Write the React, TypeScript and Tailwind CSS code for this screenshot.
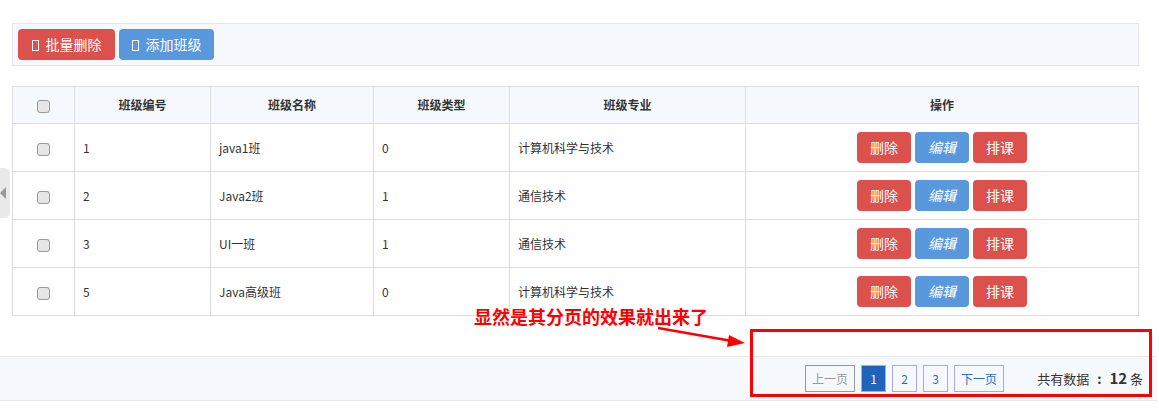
import React from 'react';

const rows = [
  {id: '1', name: 'java1班', type: '0', major: '计算机科学与技术'},
  {id: '2', name: 'Java2班', type: '1', major: '通信技术'},
  {id: '3', name: 'UI一班', type: '1', major: '通信技术'},
  {id: '5', name: 'Java高级班', type: '0', major: '计算机科学与技术'},
];

const font = {fontFamily: '"Noto Sans CJK SC", "Noto Sans", sans-serif'};

const Box = () => <span className="inline-block w-[7px] h-[11px] border border-white mr-[7px] align-[-1px]" />;

const Check = () => <span className="inline-block w-[13px] h-[13px] rounded-[3px] border border-[#9a9a9a] bg-[#e6e6e6] align-middle" />;

const App: React.FC = () => {
  return (
    <div className="relative w-[1159px] h-[415px] bg-white text-[#333] overflow-hidden" style={font}>
      {/* left collapse tab */}
      <div className="absolute left-0 top-[168px] w-[10px] h-[50px] bg-[#e9e9e9] rounded-r-[5px] flex items-center">
        <span className="w-0 h-0 border-y-[6px] border-y-transparent border-r-[6px] border-r-[#999]" />
      </div>

      <div className="pt-[23px] pl-[12px] w-[1139px]">
        <div className="h-[43px] border border-[#e6e6e6] bg-[#f5f9fd] flex items-center gap-[4px] px-[5px]">
          <button className="h-[31px] w-[97px] rounded-[4px] bg-[#dd514c] text-white text-[14px]"><Box />批量删除</button>
          <button className="h-[31px] w-[95px] rounded-[4px] bg-[#5a98de] text-white text-[14px]"><Box />添加班级</button>
        </div>

        <table className="mt-[20px] w-[1127px] border-collapse text-[12px] table-fixed">
          <thead>
            <tr className="h-[37px] bg-[#f5f9fd] font-bold">
              <th className="w-[62px] border border-[#ddd]"><Check /></th>
              <th className="w-[136px] border border-[#ddd]">班级编号</th>
              <th className="w-[163px] border border-[#ddd]">班级名称</th>
              <th className="w-[136px] border border-[#ddd]">班级类型</th>
              <th className="w-[236px] border border-[#ddd]">班级专业</th>
              <th className="border border-[#ddd]">操作</th>
            </tr>
          </thead>
          <tbody>
            {rows.map((r) => (
              <tr key={r.id} className="h-[48px]">
                <td className="border border-[#ddd] text-center"><Check /></td>
                <td className="border border-[#ddd] px-[8px]">{r.id}</td>
                <td className="border border-[#ddd] px-[8px]">{r.name}</td>
                <td className="border border-[#ddd] px-[8px]">{r.type}</td>
                <td className="border border-[#ddd] px-[8px]">{r.major}</td>
                <td className="border border-[#ddd]">
                  <div className="flex justify-center gap-[4px] text-[14px] text-white">
                    <button className="h-[31px] w-[54px] rounded-[4px] bg-[#dd514c]">删除</button>
                    <button className="h-[31px] w-[54px] rounded-[4px] bg-[#5a98de] italic">编辑</button>
                    <button className="h-[31px] w-[54px] rounded-[4px] bg-[#dd514c]">排课</button>
                  </div>
                </td>
              </tr>
            ))}
          </tbody>
        </table>
      </div>

      <div className="mt-[40px] w-[1157px] h-[45px] border-y border-[#e8e8e8] bg-[#f5f9fd] flex items-center justify-end pr-[14px] text-[12px]">
        <div className="flex items-center gap-[6px]">
          <span className="h-[27px] w-[50px] border border-[#999] text-[#999] flex items-center justify-center">上一页</span>
          <span className="h-[27px] w-[25px] border border-[#a9a6f0] bg-[#1f64b8] text-white flex items-center justify-center">1</span>
          <span className="h-[27px] w-[25px] border border-[#a9a6f0] text-[#2b6cc4] flex items-center justify-center">2</span>
          <span className="h-[27px] w-[25px] border border-[#a9a6f0] text-[#2b6cc4] flex items-center justify-center">3</span>
          <span className="h-[27px] w-[50px] border border-[#a9a6f0] text-[#2b6cc4] flex items-center justify-center">下一页</span>
        </div>
        <div className="ml-[33px] text-[13px] text-[#333]">
          共有数据<span className="mx-[8px] font-bold">:</span><span className="font-bold text-[15px]">12</span> 条
        </div>
      </div>

      {/* annotation overlay */}
      <div className="absolute left-[474px] top-[304px] text-[18px] leading-[24px] font-bold text-[#ff0000]">显然是其分页的效果就出来了</div>
      <svg className="absolute left-0 top-0" width="1159" height="415">
        <line x1="658" y1="328" x2="732" y2="341" stroke="#ff0000" strokeWidth="2.5" />
        <polygon points="745,343 729,335 727,347" fill="#ff0000" />
      </svg>
      <div className="absolute left-[750px] top-[329px] w-[402px] h-[68px] border-[3px] border-[#ff0000]" />
    </div>
  );
};

export default App;
